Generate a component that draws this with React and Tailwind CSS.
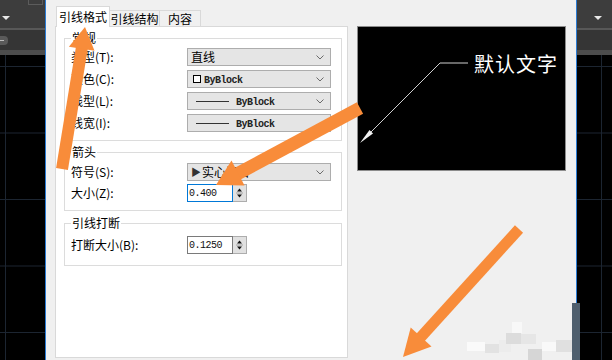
import React from "react";

const ORANGE = "#f88c3a";

const Chevron = () => (
  <svg width="8" height="5" viewBox="0 0 8 5">
    <path d="M0.5 0.5 L4 4 L7.5 0.5" fill="none" stroke="#6b6b6b" strokeWidth="1" />
  </svg>
);

const Dropdown = ({ children, chevron = true }) => (
  <div className="w-[144px] h-[18px] bg-[#e5e5e5] border border-[#adadad] flex items-center pl-[2px] pr-[6px] text-[12px] leading-none">
    <div className="flex-1 flex items-center">{children}</div>
    {chevron && <Chevron />}
  </div>
);

const ByBlock = () => (
  <span className="font-['Liberation_Mono'] text-[10px] tracking-[-0.5px] font-bold text-[#222]">ByBlock</span>
);

const LineSample = () => (
  <div className="flex items-center">
    <div className="ml-[6px] w-[33px] h-px bg-[#333]" />
    <div className="ml-[7px]">
      <ByBlock />
    </div>
  </div>
);

const SpinInput = ({ value, focused }) => (
  <div className="flex h-[18px]">
    <div
      className={`w-[46px] bg-white border ${
        focused ? "border-[#0078d7]" : "border-[#7a7a7a]"
      } flex items-center pl-[1px] font-['Liberation_Mono'] text-[10px] tracking-[-0.5px] text-[#111]`}
    >
      {value}
    </div>
    <div className="w-[14px] bg-[#e1e1e1] border border-l-0 border-[#adadad] flex items-center justify-center">
      <svg width="7" height="12" viewBox="0 0 7 12">
        <path d="M3.5 1.5 L6 4.5 H1 Z" fill="#111" />
        <path d="M0 6 H7" stroke="#a0a0a0" strokeWidth="1" />
        <path d="M1 7.5 H6 L3.5 10.5 Z" fill="#111" />
      </svg>
    </div>
  </div>
);

const Row = ({ label, children }) => (
  <div className="flex items-center">
    <span className="w-[116px] text-[12px] leading-none text-black">{label}</span>
    {children}
  </div>
);

const Group = ({ title, className, children }) => (
  <fieldset className={`border border-[#dcdcdc] px-[6px] ${className}`}>
    <legend className="px-[1px] text-[12px] leading-[14px] text-black">{title}</legend>
    {children}
  </fieldset>
);

// dark AutoCAD window strip at each side of the dialog
const CadStrip = ({ side }) => {
  const left = side === "left";
  return (
    <div
      className={`flex flex-col bg-black ${
        left ? "w-[46px] border-r border-[#2a7bd4]" : "w-[36px] border-l border-[#2a7bd4]"
      }`}
    >
      <div className="h-[28px] bg-[#3d3d3d] flex items-end justify-between">
        {left ? (
          <>
            <svg width="12" height="12" className="mb-[5px] ml-[1px]">
              <path d="M1 5 H9 L5 9 Z" fill="#e8e8e8" />
            </svg>
            <div className="self-start w-[15px] h-[5px] mr-[2px] border border-t-0 border-[#5c5c5c]" />
          </>
        ) : (
          <svg width="12" height="12" className="mb-[5px] ml-[16px]">
            <path d="M1 5 H9 L5 9 Z" fill="#e8e8e8" />
          </svg>
        )}
      </div>
      <div className="h-[2px] bg-[#585858]" />
      <div className="h-[20px] bg-[#353535] flex items-center">
        {left && (
          <div className="w-[8px] h-[9px] bg-[#5a5a5a] rounded-r-[4px] flex items-center">
            <div className="w-[4px] h-px bg-[#bbb]" />
          </div>
        )}
      </div>
      <div className="h-[5px] bg-[#4c4c4c]" />
      <div
        className={`flex-1 [background-image:linear-gradient(#1c2531_1px,transparent_1px),linear-gradient(90deg,#1c2531_1px,transparent_1px)] [background-size:66.5px_66.5px] ${
          left ? "[background-position:5px_11px]" : "[background-position:24px_11px]"
        }`}
      />
    </div>
  );
};

const Preview = () => (
  <div className="mt-[20px] w-[209px] h-[145px] bg-black border border-[#8c8c8c]">
    <svg width="207" height="143" viewBox="0 0 207 143">
      <path d="M110 36 H82 L8 110" fill="none" stroke="#cfcfcf" strokeWidth="1" />
      <path d="M2 116 L15 106.5 L11.5 103 Z" fill="#f2f2f2" />
      <text
        x="116"
        y="45"
        fill="#ffffff"
        fontSize="20"
        letterSpacing="1"
        fontFamily="'Noto Sans CJK SC', sans-serif"
      >
        默认文字
      </text>
    </svg>
  </div>
);

const Overlay = () => (
  <svg className="absolute inset-0 pointer-events-none" width="612" height="360" viewBox="0 0 612 360">
    {/* pixelated watermark */}
    <rect x="467" y="342" width="18" height="9" fill="#fafafa" />
    <rect x="485" y="344" width="14" height="9" fill="#e2e2e2" />
    <rect x="499" y="340" width="12" height="12" fill="#ececec" />
    <rect x="512" y="322" width="10" height="11" fill="#f8f8f8" />
    <rect x="506" y="333" width="15" height="11" fill="#dcdcdc" />
    <rect x="521" y="334" width="15" height="10" fill="#e6e6e6" />
    <rect x="528" y="349" width="14" height="11" fill="#d6d6d6" />
    <rect x="542" y="342" width="14" height="9" fill="#f9f9f9" />
    <rect x="556" y="340" width="16" height="12" fill="#e0e0e0" />
    <rect x="572" y="303" width="8" height="57" fill="#4f5f6e" />

    {/* orange arrows */}
    <line x1="62" y1="169" x2="82" y2="47" stroke={ORANGE} strokeWidth="12" />
    <polygon points="85,27 68.9,46.7 94.5,50.7" fill={ORANGE} />

    <line x1="360" y1="108" x2="237" y2="174" stroke={ORANGE} strokeWidth="13" />
    <polygon points="216,185 231.5,160.6 244.5,185.4" fill={ORANGE} />

    <line x1="519" y1="229" x2="420" y2="338" stroke={ORANGE} strokeWidth="11" />
    <polygon points="403,357 431.5,346.4 410.7,327.6" fill={ORANGE} />
  </svg>
);

export default function App() {
  return (
    <div className="relative w-[612px] h-[360px] overflow-hidden flex font-['Noto_Sans_CJK_SC',sans-serif]">
      <CadStrip side="left" />

      <div className="flex-1 bg-[#f0f0f0] flex pl-[9px] pt-[6px] pb-[2px]">
        <div className="w-[293px] flex flex-col">
          <div className="h-[20px] flex items-end pl-[1px] text-[12px] leading-none text-black">
            <div className="relative z-10 -mb-px w-[54px] h-[21px] bg-white border border-b-0 border-[#d9d9d9] flex items-center justify-center">
              引线格式
            </div>
            <div className="w-[50px] h-[16px] border border-l-0 border-b-0 border-[#d9d9d9] flex items-center justify-center">
              引线结构
            </div>
            <div className="w-[41px] h-[16px] border border-l-0 border-b-0 border-[#d9d9d9] flex items-center justify-center">
              内容
            </div>
          </div>

          <div className="flex-1 bg-white border border-[#d9d9d9] pt-[4px] pl-[8px] pr-[5px]">
            <Group title="常规" className="pt-[3px] pb-[8px]">
              <div className="flex flex-col gap-[4px]">
                <Row label="类型(T):">
                  <Dropdown>
                    <span className="ml-px">直线</span>
                  </Dropdown>
                </Row>
                <Row label="颜色(C):">
                  <Dropdown>
                    <div className="ml-[3px] w-[8px] h-[8px] border border-black bg-white" />
                    <span className="ml-[3px]">
                      <ByBlock />
                    </span>
                  </Dropdown>
                </Row>
                <Row label="线型(L):">
                  <Dropdown>
                    <LineSample />
                  </Dropdown>
                </Row>
                <Row label="线宽(I):">
                  <Dropdown chevron={false}>
                    <LineSample />
                  </Dropdown>
                </Row>
              </div>
            </Group>

            <Group title="箭头" className="mt-[4px] pt-[4px] pb-[8px]">
              <div className="flex flex-col gap-[3px]">
                <Row label="符号(S):">
                  <Dropdown>
                    <span className="ml-px text-[10px] text-[#333]">▶</span>
                    <span className="ml-[1px]">实心闭合</span>
                  </Dropdown>
                </Row>
                <Row label="大小(Z):">
                  <SpinInput value="0.400" focused />
                </Row>
              </div>
            </Group>

            <Group title="引线打断" className="mt-[5px] pt-[6px] pb-[11px]">
              <Row label="打断大小(B):">
                <SpinInput value="0.1250" />
              </Row>
            </Group>
          </div>
        </div>

        <div className="ml-[9px]">
          <Preview />
        </div>
      </div>

      <CadStrip side="right" />
      <Overlay />
    </div>
  );
}
